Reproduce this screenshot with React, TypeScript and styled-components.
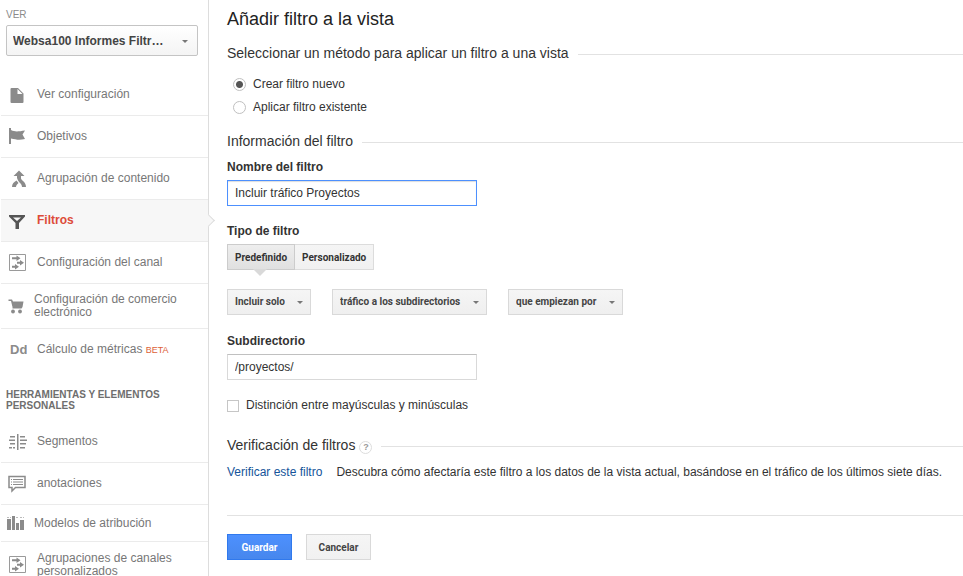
import React, { useState } from "react";
import styled, { createGlobalStyle } from "styled-components";

const GlobalStyle = createGlobalStyle`
  *, *::before, *::after { box-sizing: border-box; }
  html, body { margin: 0; background: #fff; }
  body, button, input, select {
    font-family: "Liberation Sans", Arial, sans-serif;
    font-size: 12px;
    color: #333;
  }
`;

const Page = styled.div`
  display: flex;
  height: 100vh;
  overflow: hidden;
`;

const Sidebar = styled.aside`
  flex: 0 0 209px;
  border-right: 1px solid #ddd;
`;

const ViewPicker = styled.div`
  display: flex;
  flex-direction: column;
  gap: 4px;
  padding: 9px 10px 18px 6px;
`;

const ViewLabel = styled.label`
  font-size: 10px;
  line-height: 12px;
  color: #8a8a8a;
`;

const SelectBox = styled.span`
  position: relative;
  display: flex;
`;

const Caret = styled.span<{ $right: number }>`
  position: absolute;
  right: ${(p) => p.$right}px;
  top: 50%;
  margin-top: -1px;
  border: 3px solid transparent;
  border-top-color: #777;
  border-bottom-width: 0;
  pointer-events: none;
`;

const ViewSelect = styled.select`
  appearance: none;
  width: 100%;
  height: 31px;
  padding: 0 32px 0 6px;
  border: 1px solid #c4c4c4;
  border-radius: 2px;
  background: linear-gradient(#fff, #f4f4f4);
  font-weight: bold;
  color: #444;
  text-overflow: ellipsis;
`;

const Nav = styled.nav`
  display: flex;
  flex-direction: column;
`;

const NavLink = styled.a<{ $active?: boolean; $height: number; $gap: number }>`
  position: relative;
  display: flex;
  align-items: center;
  gap: ${(p) => p.$gap}px;
  height: ${(p) => p.$height}px;
  margin-left: 1px;
  padding-left: 6px;
  border-bottom: 1px solid #ebebeb;
  background: ${(p) => (p.$active ? "#f7f7f7" : "transparent")};
  color: ${(p) => (p.$active ? "#dd4b39" : "#777")};
  font-weight: ${(p) => (p.$active ? "bold" : "normal")};
  line-height: 13px;
  text-decoration: none;

  &:last-child { border-bottom: 0; }

  svg {
    flex: none;
    fill: ${(p) => (p.$active ? "#555" : "#8b8b8b")};
  }
`;

const ActiveNotch = styled.span`
  position: absolute;
  right: -5px;
  top: 50%;
  width: 9px;
  height: 9px;
  margin-top: -5px;
  border: solid #ddd;
  border-width: 1px 1px 0 0;
  background: #f7f7f7;
  transform: rotate(45deg);
`;

const Beta = styled.span`
  font-size: 9px;
  color: #dd6137;
`;

const NavTitle = styled.h2`
  margin: 0;
  padding: 18px 6px 10px;
  font-size: 10px;
  line-height: 11px;
  color: #6e6e6e;
`;

const Main = styled.main`
  flex: 1;
  min-width: 0;
  padding: 7px 0 16px 18px;
`;

const Title = styled.h1`
  margin: 0;
  font-size: 18px;
  font-weight: normal;
  line-height: 24px;
  color: #222;
`;

const Section = styled.section`
  margin-top: 12px;
`;

const Heading = styled.h2`
  display: flex;
  align-items: center;
  gap: 9px;
  margin: 0;
  font-size: 14px;
  font-weight: normal;
  line-height: 20px;

  &::after {
    content: "";
    flex: 1;
    margin-top: 2px;
    border-top: 1px solid #e2e2e2;
  }
`;

const HeadingText = styled.span`
  display: flex;
  align-items: center;
  gap: 4px;
`;

const HelpButton = styled.button`
  width: 13px;
  height: 13px;
  margin-top: 4px;
  padding: 0;
  border: 1px solid #ddd;
  border-radius: 50%;
  background: #fff;
  color: #999;
  font-size: 9px;
  font-weight: bold;
  line-height: 11px;
`;

const RadioGroup = styled.div`
  display: flex;
  flex-direction: column;
  padding: 9px 0 1px 6px;
`;

const Choice = styled.label<{ $height: number }>`
  display: flex;
  align-items: center;
  gap: 7px;
  height: ${(p) => p.$height}px;
`;

const Radio = styled.input`
  appearance: none;
  width: 13px;
  height: 13px;
  margin: 2px 0 0;
  border: 1px solid #c0c0c0;
  border-radius: 50%;

  &:checked { background: radial-gradient(circle, #555 3px, #fff 4px); }
`;

const Checkbox = styled.input`
  appearance: none;
  width: 12px;
  height: 12px;
  margin: 2px 0 0;
  border: 1px solid #c6c6c6;

  &:checked { background: #555; }
`;

const FieldLabel = styled.label<{ $space: number }>`
  display: block;
  margin-top: ${(p) => p.$space}px;
  margin-bottom: 5px;
  font-weight: bold;
  line-height: 16px;
`;

const TextField = styled.input`
  display: block;
  width: 250px;
  height: 26px;
  padding: 0 7px;
  border: 1px solid #d9d9d9;
  border-top-color: #c0c0c0;

  &:focus {
    border-color: #4d90fe;
    box-shadow: inset 0 1px 1px #ddd;
    outline: 0;
  }
`;

const Tabs = styled.div`
  display: flex;
`;

const Tab = styled.button<{ $active?: boolean }>`
  position: relative;
  height: 26px;
  padding: 0 7px;
  border: 1px solid ${(p) => (p.$active ? "#ccc" : "#dcdcdc")};
  border-left-width: ${(p) => (p.$active ? "1px" : "0")};
  background: ${(p) => (p.$active ? "linear-gradient(#eee, #e0e0e0)" : "linear-gradient(#f5f5f5, #f1f1f1)")};
  font: bold 10px Roboto, sans-serif;

  &::after {
    content: "";
    display: ${(p) => (p.$active ? "block" : "none")};
    position: absolute;
    left: 50%;
    top: 100%;
    margin-left: -8px;
    border: 7px solid transparent;
    border-top-color: #d9d9d9;
    border-bottom-width: 0;
  }
`;

const Conditions = styled.div`
  display: flex;
  gap: 21px;
  margin-top: 19px;
`;

const ConditionSelect = styled.select`
  appearance: none;
  height: 26px;
  padding: 0 25px 2px 7px;
  border: 1px solid #d9d9d9;
  border-radius: 0;
  background: linear-gradient(#f5f5f5, #efefef);
  font: bold 10px Roboto, sans-serif;
  color: #444;
`;

const CheckRow = styled.div`
  margin: 17px 0 22px;
`;

const Verification = styled.p`
  display: flex;
  gap: 14px;
  margin: 9px 0 0;
  padding-bottom: 35px;
  border-bottom: 1px solid #e2e2e2;
  line-height: 16px;
`;

const VerifyLink = styled.a`
  flex: none;
  color: #15549a;
  text-decoration: none;
`;

const Actions = styled.div`
  display: flex;
  gap: 14px;
  margin-top: 18px;
`;

const ActionButton = styled.button<{ $primary?: boolean }>`
  width: 65px;
  height: 26px;
  padding: 0;
  border: 1px solid ${(p) => (p.$primary ? "#3079ed" : "#d9d9d9")};
  background: ${(p) => (p.$primary ? "linear-gradient(#4d90fe, #4787ed)" : "linear-gradient(#f5f5f5, #f1f1f1)")};
  color: ${(p) => (p.$primary ? "#fff" : "#444")};
  font: bold 10px Roboto, sans-serif;
`;

const Svg = ({ children }: { children: React.ReactNode }) => (
  <svg width="20" height="20" viewBox="0 0 20 20" aria-hidden="true">{children}</svg>
);

const PageIcon = () => <Svg><path d="M4.500 3H11l5.500 5.500V17a1 1 0 0 1-1 1h-11a1 1 0 0 1-1-1V4a1 1 0 0 1 1-1zM10.500 4v5h5z" fillRule="evenodd" /></Svg>;
const FlagIcon = () => <Svg><path d="M2 1h2v2c4 2 7 1.500 14 .5L15.500 7.500 18 12c-6 1.500-9 .5-14-.5V17H2z" /></Svg>;
const MergeIcon = () => (
  <Svg>
    <path d="M12 1.500L17.500 7H14v2.500c1 2.500 5 3.500 5 8.500h-4c0-3-2.500-4-4-6.500L10 9V7H6.500z" />
    <path d="M9.500 11.500l2 2.500c-1.500 1.500-2.500 2.500-2.500 4H5c0-3.500 2-5 4.500-6.500z" />
  </Svg>
);
const FunnelIcon = () => <Svg><path d="M2 4h16v1.500l-6 6.500v6H8.500v-6L2 5.500zM6 6.500L10 10l4-3.500z" fillRule="evenodd" /></Svg>;
const ChannelIcon = () => (
  <Svg>
    <path d="M2.500 1.500h16v16h-16z" fill="none" stroke="#9a9a9a" />
    <path d="M5 4.200h4.500V2.500l4 2.800-4 2.700V6.200H5zM10 8.700h3V7l4 2.800-4 2.700v-1.700h-3zM5 12.700h3V11l4 2.800-4 2.700v-1.700H5z" />
  </Svg>
);
const CartIcon = () => (
  <Svg>
    <path d="M1.500 3.500h3.500l1 2h10.500L15.500 11l-1 1.500H5.500V11L4 5H1.500z" />
    <circle cx="6" cy="15.500" r="1.900" /><circle cx="13" cy="15.500" r="1.900" />
  </Svg>
);
const MetricIcon = () => (
  <Svg><text x="3" y="14" fontFamily="Liberation Sans" fontWeight="bold" fontSize="13">Dd</text></Svg>
);
const SegmentIcon = () => (
  <Svg><path d="M3 4h5v1.500H3zM2 7.500h6V9H2zM3 11h5v1.500H3zM2 15h3v1.500H2zM6 15h2v1.500H6zM10 2h1.500v16H10zM13 4h5v1.500h-5zM13 7.500h7V9h-7zM13 11h6v1.500h-6zM13 15h5v1.500h-5z" /></Svg>
);
const NoteIcon = () => (
  <Svg>
    <path d="M2 2.500h16v11H8.500L5 17v-3.500H2z" fill="none" stroke="#8b8b8b" strokeWidth="1.500" />
    <path d="M4 5h1v1H4zM6 5h10v1H6zM4 7.500h1v1H4zM6 7.500h10v1H6zM4 10h1v1H4zM6 10h10v1H6z" />
  </Svg>
);
const BarsIcon = () => (
  <Svg>
    <path d="M0 6h4v11H0zM5 3h3v14H5zM9 10h3v7H9zM13 7h4v10h-4z" />
    <path d="M0 4.500h4M9 4.500h3M13 4.500h4" stroke="#bbb" strokeDasharray="2 1" />
  </Svg>
);

type Item = { icon: React.FC; text: React.ReactNode; height: number; gap?: number; active?: boolean };

const viewItems: Item[] = [
  { icon: PageIcon, text: "Ver configuración", height: 42 },
  { icon: FlagIcon, text: "Objetivos", height: 42 },
  { icon: MergeIcon, text: "Agrupación de contenido", height: 42 },
  { icon: FunnelIcon, text: "Filtros", height: 42, active: true },
  { icon: ChannelIcon, text: "Configuración del canal", height: 42 },
  { icon: CartIcon, text: "Configuración de comercio electrónico", height: 45, gap: 7 },
  { icon: MetricIcon, text: <>Cálculo de métricas <Beta>BETA</Beta></>, height: 42 },
];

const personalItems: Item[] = [
  { icon: SegmentIcon, text: "Segmentos", height: 42 },
  { icon: NoteIcon, text: "anotaciones", height: 42 },
  { icon: BarsIcon, text: "Modelos de atribución", height: 37, gap: 7 },
  { icon: ChannelIcon, text: "Agrupaciones de canales personalizados", height: 45 },
];

const NavList = ({ items }: { items: Item[] }) => (
  <Nav>
    {items.map(({ icon: Icon, text, height, gap = 10, active }, i) => (
      <NavLink key={i} href="#" $height={height} $gap={gap} $active={active}>
        <Icon />
        <span>{text}</span>
        {active && <ActiveNotch />}
      </NavLink>
    ))}
  </Nav>
);

const conditions = [
  { name: "Acción", value: "Incluir solo" },
  { name: "Origen", value: "tráfico a los subdirectorios" },
  { name: "Expresión", value: "que empiezan por" },
];

export default function App() {
  const [name, setName] = useState("Incluir tráfico Proyectos");
  const [folder, setFolder] = useState("/proyectos/");
  return (
    <Page>
      <GlobalStyle />
      <Sidebar>
        <ViewPicker>
          <ViewLabel htmlFor="view">VER</ViewLabel>
          <SelectBox>
            <ViewSelect id="view"><option>Websa100 Informes Filtr…</option></ViewSelect>
            <Caret $right={10} />
          </SelectBox>
        </ViewPicker>
        <NavList items={viewItems} />
        <NavTitle>HERRAMIENTAS Y ELEMENTOS PERSONALES</NavTitle>
        <NavList items={personalItems} />
      </Sidebar>
      <Main>
        <Title>Añadir filtro a la vista</Title>
        <Section>
          <Heading>Seleccionar un método para aplicar un filtro a una vista</Heading>
          <RadioGroup>
            <Choice $height={23}><Radio type="radio" name="method" defaultChecked />Crear filtro nuevo</Choice>
            <Choice $height={23}><Radio type="radio" name="method" />Aplicar filtro existente</Choice>
          </RadioGroup>
        </Section>
        <Section>
          <Heading>Información del filtro</Heading>
          <FieldLabel htmlFor="name" $space={8}>Nombre del filtro</FieldLabel>
          <TextField id="name" autoFocus value={name} onChange={(e) => setName(e.target.value)} />
          <FieldLabel as="div" $space={17}>Tipo de filtro</FieldLabel>
          <Tabs>
            <Tab type="button" $active>Predefinido</Tab>
            <Tab type="button">Personalizado</Tab>
          </Tabs>
          <Conditions>
            {conditions.map((c) => (
              <SelectBox key={c.name}>
                <ConditionSelect aria-label={c.name}><option>{c.value}</option></ConditionSelect>
                <Caret $right={8} />
              </SelectBox>
            ))}
          </Conditions>
          <FieldLabel htmlFor="folder" $space={18}>Subdirectorio</FieldLabel>
          <TextField id="folder" value={folder} onChange={(e) => setFolder(e.target.value)} />
          <CheckRow>
            <Choice $height={16}><Checkbox type="checkbox" />Distinción entre mayúsculas y minúsculas</Choice>
          </CheckRow>
        </Section>
        <Section>
          <Heading>
            <HeadingText>Verificación de filtros <HelpButton type="button" aria-label="Ayuda">?</HelpButton></HeadingText>
          </Heading>
          <Verification>
            <VerifyLink href="#">Verificar este filtro</VerifyLink>
            <span>Descubra cómo afectaría este filtro a los datos de la vista actual, basándose en el tráfico de los últimos siete días.</span>
          </Verification>
        </Section>
        <Actions>
          <ActionButton type="button" $primary>Guardar</ActionButton>
          <ActionButton type="button">Cancelar</ActionButton>
        </Actions>
      </Main>
    </Page>
  );
}
